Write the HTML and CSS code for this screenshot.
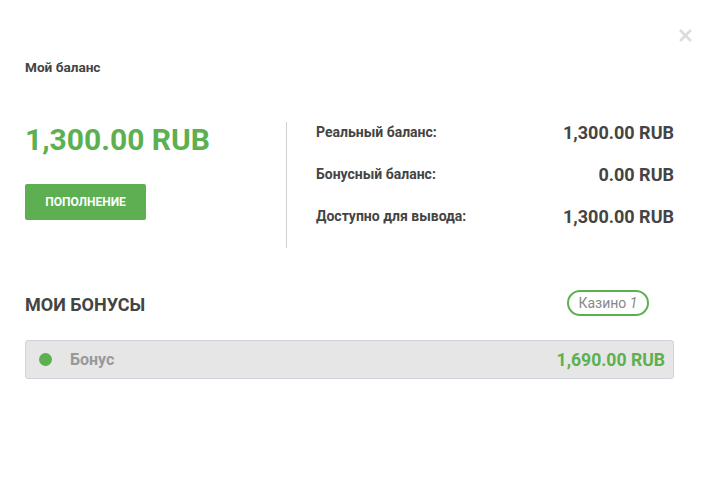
FILE: index.html
```html
<!DOCTYPE html>
<html lang="ru">
<head>
<meta charset="utf-8">
<link rel="stylesheet" href="styles.css">
</head>
<body>
<div class="modal">
  <button class="close" aria-label="Закрыть">
    <svg width="13" height="13" viewBox="0 0 13 13"><path d="M1 1L12 12M12 1L1 12" stroke="#dcdcdc" stroke-width="2.6" fill="none"/></svg>
  </button>
  <div class="title">Мой баланс</div>
  <div class="balance">
    <div class="balance-left">
      <div class="amount">1,300.00 RUB</div>
      <button class="deposit">ПОПОЛНЕНИЕ</button>
    </div>
    <div class="balance-right">
      <div class="row"><span class="label">Реальный баланс:</span><span class="value">1,300.00 RUB</span></div>
      <div class="row"><span class="label">Бонусный баланс:</span><span class="value">0.00 RUB</span></div>
      <div class="row"><span class="label">Доступно для вывода:</span><span class="value">1,300.00 RUB</span></div>
    </div>
  </div>
  <div class="bonus-head">
    <div class="bonus-title">МОИ БОНУСЫ</div>
    <div class="badge">Казино <i>1</i></div>
  </div>
  <div class="bonus-item">
    <span class="dot"></span>
    <span class="bonus-name">Бонус</span>
    <span class="bonus-amount">1,690.00 RUB</span>
  </div>
</div>
</body>
</html>
```
FILE: styles.css
```css
html, body { margin: 0; padding: 0; background: #fff; }
body { font-family: Roboto, "Noto Sans", sans-serif; color: #444; }
.modal { position: relative; width: 649px; padding: 59px 41px 0 25px; }
.close { position: absolute; top: 29px; right: 23px; padding: 0; border: 0; background: none; width: 13px; height: 13px; display: block; }
.close svg { display: block; }
.title { font-size: 13.6px; font-weight: 700; line-height: 16px; color: #444; }
.balance { display: flex; margin-top: 47px; height: 126px; }
.balance-left { width: 261px; display: flex; flex-direction: column; align-items: flex-start; }
.amount { font-size: 30px; font-weight: 700; line-height: 36px; color: #5cb050; }
.deposit { margin-top: 26px; width: 121px; height: 36px; border: 0; border-radius: 2px; background: #5daf52; color: #fff; font-family: Roboto, sans-serif; font-size: 12px; font-weight: 700; padding: 0; }
.balance-right { flex: 1; border-left: 1px solid #cfcfcf; padding-left: 29px; display: flex; flex-direction: column; gap: 22px; }
.row { display: flex; justify-content: space-between; align-items: center; height: 20px; }
.label { font-size: 14px; font-weight: 700; color: #444; }
.value { font-size: 18px; font-weight: 700; color: #444; }
.bonus-head { display: flex; justify-content: space-between; align-items: center; margin-top: 42px; padding-right: 25px; height: 26px; }
.bonus-title { font-size: 18px; font-weight: 700; color: #444; margin-top: 2px; }
.badge { box-sizing: border-box; width: 82px; height: 26px; border: 2px solid #5cb050; border-radius: 13px; color: #888; font-size: 14px; line-height: 22px; text-align: center; }
.badge i { font-style: italic; }
.bonus-item { box-sizing: border-box; margin-top: 24px; height: 39px; display: flex; align-items: center; background: #e6e6e6; border: 1px solid #cdd4de; border-radius: 3px; padding: 0 8px 0 13px; }
.dot { width: 13px; height: 13px; border-radius: 50%; background: #5cb050; }
.bonus-name { margin-left: 18px; font-size: 16px; font-weight: 700; color: #999; flex: 1; }
.bonus-amount { font-size: 17.6px; font-weight: 700; color: #5cb050; }
```
